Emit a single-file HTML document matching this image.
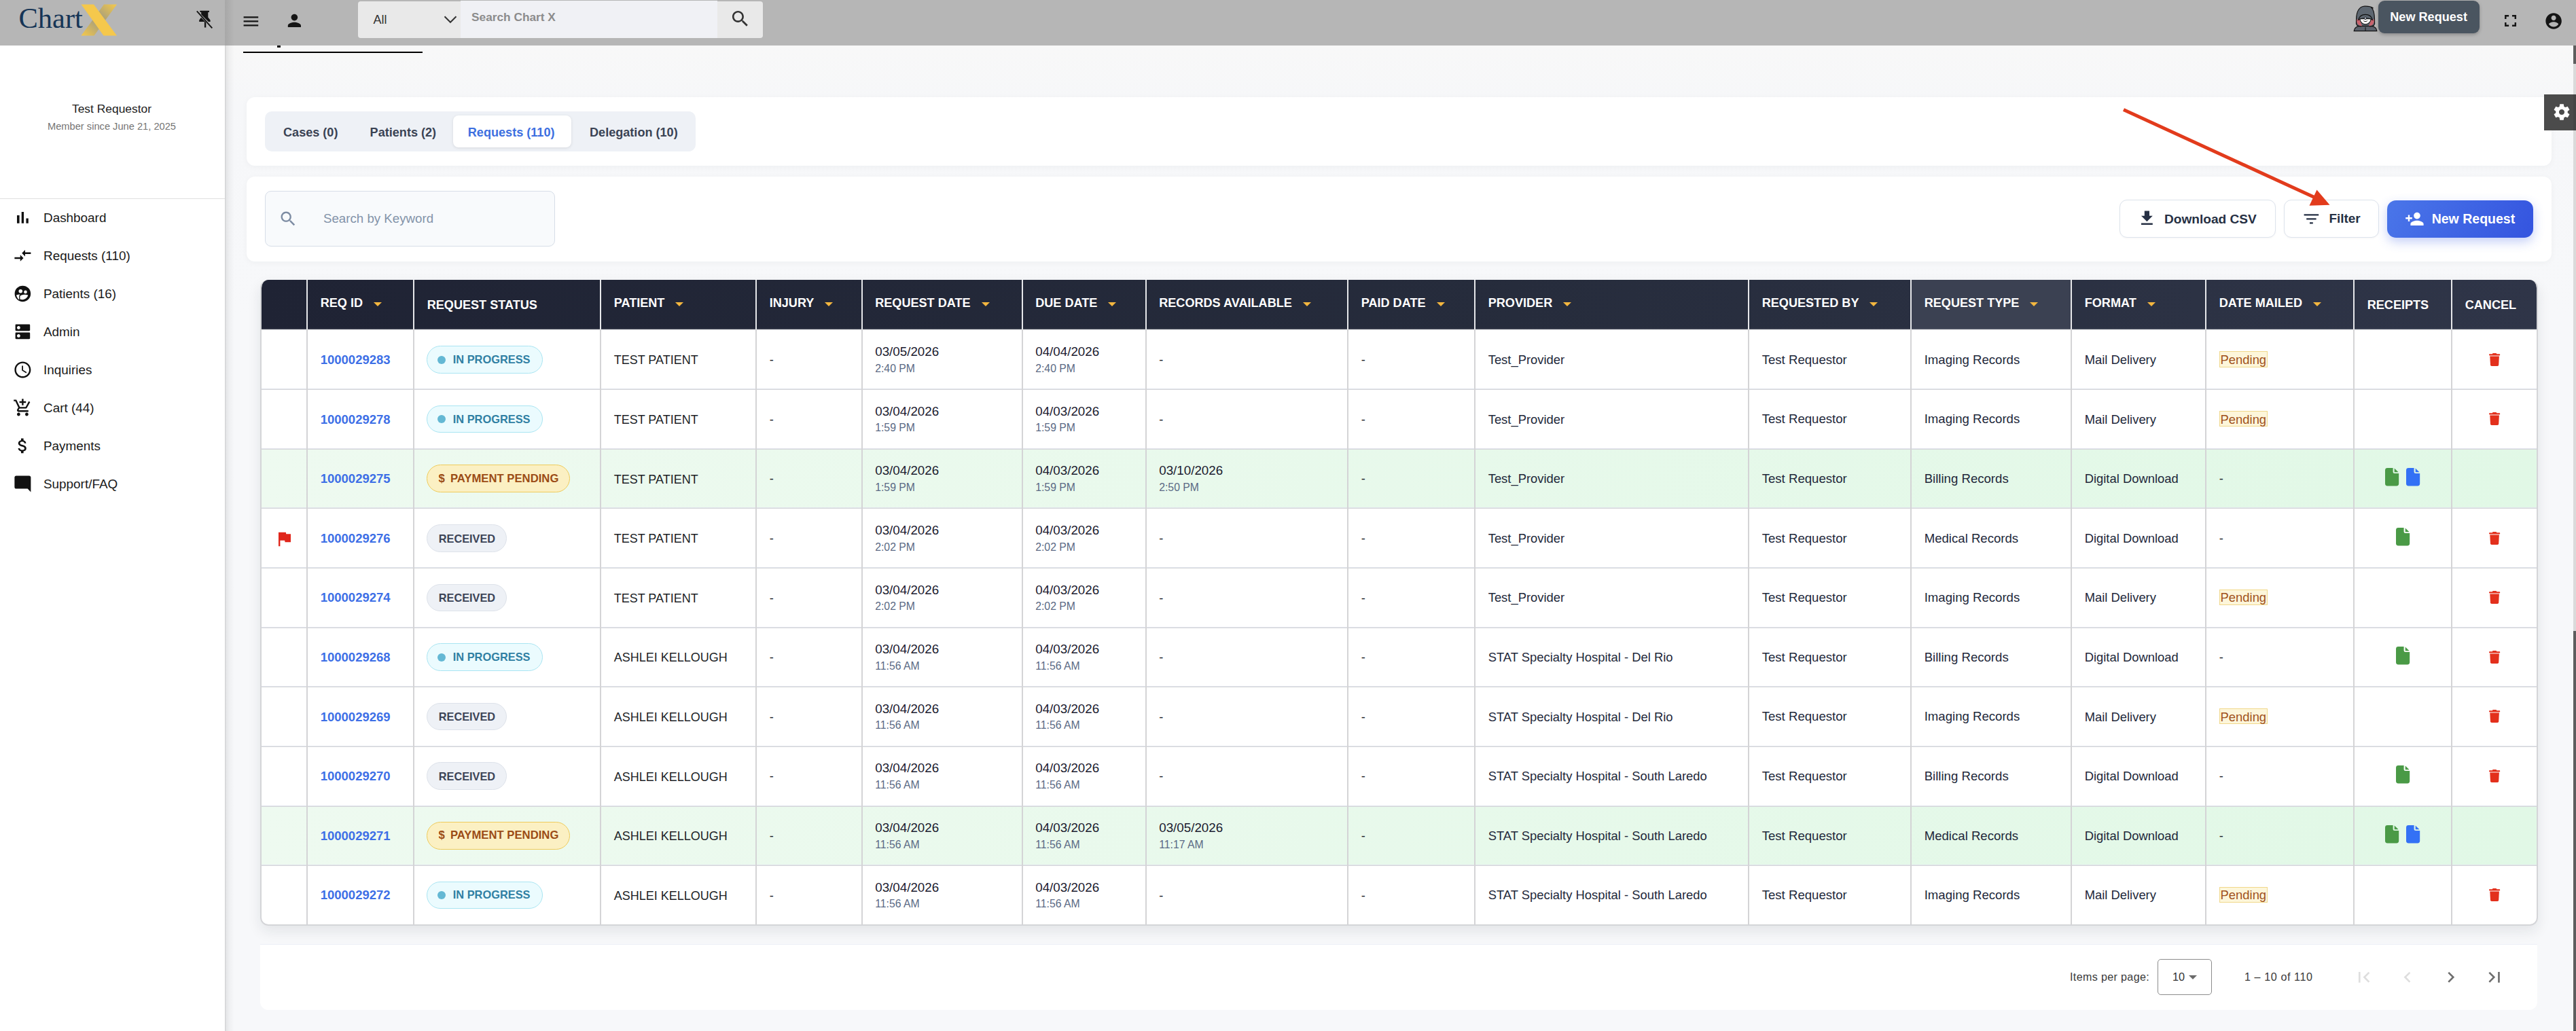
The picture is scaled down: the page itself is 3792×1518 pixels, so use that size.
<!DOCTYPE html>
<html><head><meta charset="utf-8"><title>Chart X - Requests</title>
<style>
html,body{margin:0;padding:0;}
body{width:3792px;height:1518px;overflow:hidden;position:relative;background:#f7f8fa;font-family:"Liberation Sans",sans-serif;}
.a{position:absolute;}
.t{position:absolute;white-space:nowrap;line-height:1;}
svg.a{overflow:visible;}
</style></head><body>
<div class="a" style="left:331.00px;top:67.00px;width:3461.00px;height:1451.00px;background:linear-gradient(#f8f8f8,#f6f7f9 90px,#f7f8fa 400px);"></div>
<div class="a" style="left:358.00px;top:76.00px;width:264.00px;height:2.00px;background:#000;"></div>
<div class="a" style="left:408.00px;top:67.00px;width:5.00px;height:2.50px;background:#111;"></div>
<div class="a" style="left:363.00px;top:143.00px;width:3393.00px;height:101.00px;background:#fff;border-radius:12px;box-shadow:0 2px 10px rgba(30,40,60,.04);"></div>
<div class="a" style="left:390.00px;top:164.00px;width:634.00px;height:58.60px;background:#eef1f6;border-radius:10px;"></div>
<div class="a" style="left:667.00px;top:170.00px;width:174.00px;height:47.00px;background:#fff;border-radius:8px;box-shadow:0 1px 4px rgba(0,0,0,.10);"></div>
<div class="t" style="left:417.00px;top:185.67px;font-size:18.1px;color:#3a4354;font-weight:700;">Cases (0)</div>
<div class="t" style="left:544.60px;top:185.67px;font-size:18.1px;color:#3a4354;font-weight:700;">Patients (2)</div>
<div class="t" style="left:688.80px;top:185.67px;font-size:18.1px;color:#3d6fe0;font-weight:700;">Requests (110)</div>
<div class="t" style="left:868.00px;top:185.67px;font-size:18.1px;color:#3a4354;font-weight:700;">Delegation (10)</div>
<div class="a" style="left:363.00px;top:260.00px;width:3393.00px;height:125.00px;background:#fff;border-radius:12px;box-shadow:0 2px 10px rgba(30,40,60,.04);"></div>
<div class="a" style="left:390.00px;top:281.00px;width:427.00px;height:81.60px;box-sizing:border-box;background:#f8fafc;border:1.5px solid #d7dee8;border-radius:9px;"></div>
<svg class="a" style="left:409.50px;top:308.20px;" width="28.30" height="28.30" viewBox="0 0 24 24"><path fill="#7d8ca3" d="M15.5 14h-.79l-.28-.27C15.41 12.59 16 11.11 16 9.5 16 5.91 13.09 3 9.5 3S3 5.91 3 9.5 5.91 16 9.5 16c1.61 0 3.09-.59 4.23-1.57l.27.28v.79l5 4.99L20.49 19l-4.99-5zm-6 0C7.01 14 5 11.99 5 9.5S7.01 5 9.5 5 14 7.01 14 9.5 11.99 14 9.5 14z"/></svg>
<div class="t" style="left:476.00px;top:313.17px;font-size:18.7px;color:#8393a9;font-weight:400;">Search by Keyword</div>
<div class="a" style="left:3119.60px;top:294.40px;width:230.70px;height:56.00px;box-sizing:border-box;background:#fff;border:1.5px solid #dde3ec;border-radius:11px;box-shadow:0 1px 3px rgba(0,0,0,.04);"></div>
<svg class="a" style="left:3145.80px;top:307.40px;" width="28.80" height="28.80" viewBox="0 0 24 24"><path fill="#263044" d="M19 9h-4V3H9v6H5l7 7 7-7zM5 18v2h14v-2H5z"/></svg>
<div class="t" style="left:3186.00px;top:313.13px;font-size:19.1px;color:#263044;font-weight:700;">Download CSV</div>
<div class="a" style="left:3361.70px;top:294.40px;width:140.70px;height:56.00px;box-sizing:border-box;background:#fff;border:1.5px solid #dde3ec;border-radius:11px;box-shadow:0 1px 3px rgba(0,0,0,.04);"></div>
<svg class="a" style="left:3388.40px;top:307.60px;" width="28.80" height="28.80" viewBox="0 0 24 24"><path fill="#263044" d="M10 18h4v-2h-4v2zM3 6v2h18V6H3zm3 7h12v-2H6v2z"/></svg>
<div class="t" style="left:3428.50px;top:313.30px;font-size:18.9px;color:#263044;font-weight:700;">Filter</div>
<div class="a" style="left:3514.30px;top:295.00px;width:214.60px;height:55.00px;background:linear-gradient(120deg,#4a76e9,#3454df);border-radius:13px;box-shadow:0 6px 16px rgba(60,95,230,.30);"></div>
<svg class="a" style="left:3540.30px;top:308.20px;" width="28.80" height="28.80" viewBox="0 0 24 24"><path fill="#fff" d="M15 12c2.21 0 4-1.79 4-4s-1.79-4-4-4-4 1.79-4 4 1.79 4 4 4zm-9-2V7H4v3H1v2h3v3h2v-3h3v-2H6zm9 4c-2.67 0-8 1.34-8 4v2h16v-2c0-2.66-5.33-4-8-4z"/></svg>
<div class="t" style="left:3579.70px;top:312.79px;font-size:19.5px;color:#fff;font-weight:700;">New Request</div>
<svg class="a" style="left:0;top:0" width="3792" height="1518" viewBox="0 0 3792 1518"><line x1="3126" y1="161.6" x2="3408" y2="291" stroke="#e23b1c" stroke-width="5" stroke-linecap="butt"/><polygon points="3410.5,279.5 3399.5,302.8 3429.5,301.8" fill="#e23b1c"/></svg>
<div class="a" style="left:383.00px;top:412.00px;width:3353.00px;height:950.80px;border-radius:12px;box-shadow:0 8px 20px rgba(20,28,45,.09);"></div>
<div class="a" style="left:383px;top:412px;width:3353px;height:950.8px;box-sizing:border-box;border:2px solid #d4d5d8;border-top:0;border-radius:12px;overflow:hidden;background:#fff;">
<div class="a" style="left:0.00px;top:250.00px;width:3349.00px;height:85.00px;background:linear-gradient(90deg,#eefaf0,#e1f8e6);"></div>
<div class="a" style="left:0.00px;top:776.00px;width:3349.00px;height:85.00px;background:linear-gradient(90deg,#eefaf0,#e1f8e6);"></div>
<div class="a" style="left:0.00px;top:160.00px;width:3349.00px;height:1.00px;background:#e1e4ec;"></div>
<div class="a" style="left:0.00px;top:161.00px;width:3349.00px;height:1.00px;background:#d5d6d9;"></div>
<div class="a" style="left:0.00px;top:248.00px;width:3349.00px;height:1.00px;background:#e1e4ec;"></div>
<div class="a" style="left:0.00px;top:249.00px;width:3349.00px;height:1.00px;background:#d5d6d9;"></div>
<div class="a" style="left:0.00px;top:335.00px;width:3349.00px;height:1.00px;background:#e1e4ec;"></div>
<div class="a" style="left:0.00px;top:336.00px;width:3349.00px;height:1.00px;background:#d5d6d9;"></div>
<div class="a" style="left:0.00px;top:423.00px;width:3349.00px;height:1.00px;background:#e1e4ec;"></div>
<div class="a" style="left:0.00px;top:424.00px;width:3349.00px;height:1.00px;background:#d5d6d9;"></div>
<div class="a" style="left:0.00px;top:511.00px;width:3349.00px;height:1.00px;background:#e1e4ec;"></div>
<div class="a" style="left:0.00px;top:512.00px;width:3349.00px;height:1.00px;background:#d5d6d9;"></div>
<div class="a" style="left:0.00px;top:598.00px;width:3349.00px;height:1.00px;background:#e1e4ec;"></div>
<div class="a" style="left:0.00px;top:599.00px;width:3349.00px;height:1.00px;background:#d5d6d9;"></div>
<div class="a" style="left:0.00px;top:686.00px;width:3349.00px;height:1.00px;background:#e1e4ec;"></div>
<div class="a" style="left:0.00px;top:687.00px;width:3349.00px;height:1.00px;background:#d5d6d9;"></div>
<div class="a" style="left:0.00px;top:774.00px;width:3349.00px;height:1.00px;background:#e1e4ec;"></div>
<div class="a" style="left:0.00px;top:775.00px;width:3349.00px;height:1.00px;background:#d5d6d9;"></div>
<div class="a" style="left:0.00px;top:861.00px;width:3349.00px;height:1.00px;background:#e1e4ec;"></div>
<div class="a" style="left:0.00px;top:862.00px;width:3349.00px;height:1.00px;background:#d5d6d9;"></div>
<div class="a" style="left:66.00px;top:73.00px;width:2.00px;height:876.00px;background:#d4d4d6;"></div>
<div class="a" style="left:223.00px;top:73.00px;width:2.00px;height:876.00px;background:#d4d4d6;"></div>
<div class="a" style="left:498.00px;top:73.00px;width:2.00px;height:876.00px;background:#d4d4d6;"></div>
<div class="a" style="left:727.00px;top:73.00px;width:2.00px;height:876.00px;background:#d4d4d6;"></div>
<div class="a" style="left:882.50px;top:73.00px;width:2.00px;height:876.00px;background:#d4d4d6;"></div>
<div class="a" style="left:1118.50px;top:73.00px;width:2.00px;height:876.00px;background:#d4d4d6;"></div>
<div class="a" style="left:1300.50px;top:73.00px;width:2.00px;height:876.00px;background:#d4d4d6;"></div>
<div class="a" style="left:1598.00px;top:73.00px;width:2.00px;height:876.00px;background:#d4d4d6;"></div>
<div class="a" style="left:1785.00px;top:73.00px;width:2.00px;height:876.00px;background:#d4d4d6;"></div>
<div class="a" style="left:2188.00px;top:73.00px;width:2.00px;height:876.00px;background:#d4d4d6;"></div>
<div class="a" style="left:2427.00px;top:73.00px;width:2.00px;height:876.00px;background:#d4d4d6;"></div>
<div class="a" style="left:2663.00px;top:73.00px;width:2.00px;height:876.00px;background:#d4d4d6;"></div>
<div class="a" style="left:2861.00px;top:73.00px;width:2.00px;height:876.00px;background:#d4d4d6;"></div>
<div class="a" style="left:3079.00px;top:73.00px;width:2.00px;height:876.00px;background:#d4d4d6;"></div>
<div class="a" style="left:3223.00px;top:73.00px;width:2.00px;height:876.00px;background:#d4d4d6;"></div>
<div class="a" style="left:0.00px;top:0.00px;width:3349.00px;height:73.00px;background:linear-gradient(90deg,#1f2334,#262c3c 55%,#2f3548);"></div>
<div class="a" style="left:2429.00px;top:0.00px;width:234.00px;height:73.00px;background:#3b4152;"></div>
<div class="a" style="left:0.00px;top:71.00px;width:3349.00px;height:2.00px;background:rgba(255,255,255,.07);"></div>
<div class="a" style="left:66.00px;top:0.00px;width:2.00px;height:73.00px;background:#e6e7ea;"></div>
<div class="a" style="left:223.00px;top:0.00px;width:2.00px;height:73.00px;background:#e6e7ea;"></div>
<div class="a" style="left:498.00px;top:0.00px;width:2.00px;height:73.00px;background:#e6e7ea;"></div>
<div class="a" style="left:727.00px;top:0.00px;width:2.00px;height:73.00px;background:#e6e7ea;"></div>
<div class="a" style="left:882.50px;top:0.00px;width:2.00px;height:73.00px;background:#e6e7ea;"></div>
<div class="a" style="left:1118.50px;top:0.00px;width:2.00px;height:73.00px;background:#e6e7ea;"></div>
<div class="a" style="left:1300.50px;top:0.00px;width:2.00px;height:73.00px;background:#e6e7ea;"></div>
<div class="a" style="left:1598.00px;top:0.00px;width:2.00px;height:73.00px;background:#e6e7ea;"></div>
<div class="a" style="left:1785.00px;top:0.00px;width:2.00px;height:73.00px;background:#e6e7ea;"></div>
<div class="a" style="left:2188.00px;top:0.00px;width:2.00px;height:73.00px;background:#e6e7ea;"></div>
<div class="a" style="left:2427.00px;top:0.00px;width:2.00px;height:73.00px;background:#e6e7ea;"></div>
<div class="a" style="left:2663.00px;top:0.00px;width:2.00px;height:73.00px;background:#e6e7ea;"></div>
<div class="a" style="left:2861.00px;top:0.00px;width:2.00px;height:73.00px;background:#e6e7ea;"></div>
<div class="a" style="left:3079.00px;top:0.00px;width:2.00px;height:73.00px;background:#e6e7ea;"></div>
<div class="a" style="left:3223.00px;top:0.00px;width:2.00px;height:73.00px;background:#e6e7ea;"></div>
<div class="t" style="left:86.70px;top:25.37px;font-size:18.1px;color:#fff;font-weight:700;">REQ ID<span style="display:inline-block;width:0;height:0;margin-left:16px;border-left:6px solid transparent;border-right:6px solid transparent;border-top:6.5px solid #f3b63f;position:relative;top:-1.2px;"></span></div>
<div class="t" style="left:243.70px;top:27.67px;font-size:18.1px;color:#fff;font-weight:700;">REQUEST STATUS</div>
<div class="t" style="left:518.70px;top:25.37px;font-size:18.1px;color:#fff;font-weight:700;">PATIENT<span style="display:inline-block;width:0;height:0;margin-left:16px;border-left:6px solid transparent;border-right:6px solid transparent;border-top:6.5px solid #f3b63f;position:relative;top:-1.2px;"></span></div>
<div class="t" style="left:747.70px;top:25.37px;font-size:18.1px;color:#fff;font-weight:700;">INJURY<span style="display:inline-block;width:0;height:0;margin-left:16px;border-left:6px solid transparent;border-right:6px solid transparent;border-top:6.5px solid #f3b63f;position:relative;top:-1.2px;"></span></div>
<div class="t" style="left:903.20px;top:25.37px;font-size:18.1px;color:#fff;font-weight:700;">REQUEST DATE<span style="display:inline-block;width:0;height:0;margin-left:16px;border-left:6px solid transparent;border-right:6px solid transparent;border-top:6.5px solid #f3b63f;position:relative;top:-1.2px;"></span></div>
<div class="t" style="left:1139.20px;top:25.37px;font-size:18.1px;color:#fff;font-weight:700;">DUE DATE<span style="display:inline-block;width:0;height:0;margin-left:16px;border-left:6px solid transparent;border-right:6px solid transparent;border-top:6.5px solid #f3b63f;position:relative;top:-1.2px;"></span></div>
<div class="t" style="left:1321.20px;top:25.37px;font-size:18.1px;color:#fff;font-weight:700;">RECORDS AVAILABLE<span style="display:inline-block;width:0;height:0;margin-left:16px;border-left:6px solid transparent;border-right:6px solid transparent;border-top:6.5px solid #f3b63f;position:relative;top:-1.2px;"></span></div>
<div class="t" style="left:1618.70px;top:25.37px;font-size:18.1px;color:#fff;font-weight:700;">PAID DATE<span style="display:inline-block;width:0;height:0;margin-left:16px;border-left:6px solid transparent;border-right:6px solid transparent;border-top:6.5px solid #f3b63f;position:relative;top:-1.2px;"></span></div>
<div class="t" style="left:1805.70px;top:25.37px;font-size:18.1px;color:#fff;font-weight:700;">PROVIDER<span style="display:inline-block;width:0;height:0;margin-left:16px;border-left:6px solid transparent;border-right:6px solid transparent;border-top:6.5px solid #f3b63f;position:relative;top:-1.2px;"></span></div>
<div class="t" style="left:2208.70px;top:25.37px;font-size:18.1px;color:#fff;font-weight:700;">REQUESTED BY<span style="display:inline-block;width:0;height:0;margin-left:16px;border-left:6px solid transparent;border-right:6px solid transparent;border-top:6.5px solid #f3b63f;position:relative;top:-1.2px;"></span></div>
<div class="t" style="left:2447.70px;top:25.37px;font-size:18.1px;color:#fff;font-weight:700;">REQUEST TYPE<span style="display:inline-block;width:0;height:0;margin-left:16px;border-left:6px solid transparent;border-right:6px solid transparent;border-top:6.5px solid #f3b63f;position:relative;top:-1.2px;"></span></div>
<div class="t" style="left:2683.70px;top:25.37px;font-size:18.1px;color:#fff;font-weight:700;">FORMAT<span style="display:inline-block;width:0;height:0;margin-left:16px;border-left:6px solid transparent;border-right:6px solid transparent;border-top:6.5px solid #f3b63f;position:relative;top:-1.2px;"></span></div>
<div class="t" style="left:2881.70px;top:25.37px;font-size:18.1px;color:#fff;font-weight:700;">DATE MAILED<span style="display:inline-block;width:0;height:0;margin-left:16px;border-left:6px solid transparent;border-right:6px solid transparent;border-top:6.5px solid #f3b63f;position:relative;top:-1.2px;"></span></div>
<div class="t" style="left:3099.70px;top:27.67px;font-size:18.1px;color:#fff;font-weight:700;">RECEIPTS</div>
<div class="t" style="left:3243.70px;top:27.67px;font-size:18.1px;color:#fff;font-weight:700;">CANCEL</div>
<div class="t" style="left:86.70px;top:108.94px;font-size:18.5px;color:#3d6fe6;font-weight:700;">1000029283</div>
<div class="a" style="left:243.00px;top:97.20px;width:170.50px;height:40.50px;box-sizing:border-box;background:#ebfbfe;border:1.5px solid #a9e5f2;border-radius:21px;"></div>
<div class="a" style="left:259.00px;top:111.70px;width:12.00px;height:12.00px;background:#64b8d4;border-radius:50%;"></div>
<div class="t" style="left:281.70px;top:109.01px;font-size:16.4px;color:#3080a3;font-weight:700;">IN PROGRESS</div>
<div class="t" style="left:518.70px;top:109.36px;font-size:18.0px;color:#1c1f27;font-weight:400;">TEST PATIENT</div>
<div class="t" style="left:747.70px;top:109.11px;font-size:18.3px;color:#1c1f27;font-weight:400;">-</div>
<div class="t" style="left:903.20px;top:97.28px;font-size:18.8px;color:#1c2030;font-weight:400;">03/05/2026</div>
<div class="t" style="left:903.20px;top:122.82px;font-size:15.8px;color:#5b6a85;font-weight:400;">2:40 PM</div>
<div class="t" style="left:1139.20px;top:97.28px;font-size:18.8px;color:#1c2030;font-weight:400;">04/04/2026</div>
<div class="t" style="left:1139.20px;top:122.82px;font-size:15.8px;color:#5b6a85;font-weight:400;">2:40 PM</div>
<div class="t" style="left:1321.20px;top:109.11px;font-size:18.3px;color:#1c1f27;font-weight:400;">-</div>
<div class="t" style="left:1618.70px;top:109.11px;font-size:18.3px;color:#1c1f27;font-weight:400;">-</div>
<div class="t" style="left:1805.70px;top:109.02px;font-size:18.4px;color:#22283a;font-weight:400;">Test_Provider</div>
<div class="t" style="left:2208.70px;top:108.85px;font-size:18.6px;color:#22283a;font-weight:400;">Test Requestor</div>
<div class="t" style="left:2447.70px;top:108.85px;font-size:18.6px;color:#22283a;font-weight:400;">Imaging Records</div>
<div class="t" style="left:2683.70px;top:109.02px;font-size:18.4px;color:#22283a;font-weight:400;">Mail Delivery</div>
<div class="a" style="left:2882.00px;top:105.20px;width:70.60px;height:23.50px;box-sizing:border-box;background:#fdf6da;border:1px solid #f0d88a;"></div>
<div class="t" style="left:2883.60px;top:109.02px;font-size:18.4px;color:#a0511b;font-weight:400;">Pending</div>
<svg class="a" style="left:3278.90px;top:107.70px" width="16.2" height="19" viewBox="0 0 16.2 19"><path fill="#e3301c" d="M4.8 1.3Q5 0 6.3 0H9.9Q11.2 0 11.4 1.3H15.4Q16.2 1.3 16.2 2.1V2.6Q16.2 3.4 15.4 3.4H0.8Q0 3.4 0 2.6V2.1Q0 1.3 0.8 1.3Z"/><path fill="#e3301c" d="M1.3 4.5H14.9L14.2 17.3Q14.1 19 12.4 19H3.8Q2.1 19 2 17.3Z"/></svg>
<div class="t" style="left:86.70px;top:196.54px;font-size:18.5px;color:#3d6fe6;font-weight:700;">1000029278</div>
<div class="a" style="left:243.00px;top:184.80px;width:170.50px;height:40.50px;box-sizing:border-box;background:#ebfbfe;border:1.5px solid #a9e5f2;border-radius:21px;"></div>
<div class="a" style="left:259.00px;top:199.30px;width:12.00px;height:12.00px;background:#64b8d4;border-radius:50%;"></div>
<div class="t" style="left:281.70px;top:196.61px;font-size:16.4px;color:#3080a3;font-weight:700;">IN PROGRESS</div>
<div class="t" style="left:518.70px;top:196.96px;font-size:18.0px;color:#1c1f27;font-weight:400;">TEST PATIENT</div>
<div class="t" style="left:747.70px;top:196.71px;font-size:18.3px;color:#1c1f27;font-weight:400;">-</div>
<div class="t" style="left:903.20px;top:184.88px;font-size:18.8px;color:#1c2030;font-weight:400;">03/04/2026</div>
<div class="t" style="left:903.20px;top:210.42px;font-size:15.8px;color:#5b6a85;font-weight:400;">1:59 PM</div>
<div class="t" style="left:1139.20px;top:184.88px;font-size:18.8px;color:#1c2030;font-weight:400;">04/03/2026</div>
<div class="t" style="left:1139.20px;top:210.42px;font-size:15.8px;color:#5b6a85;font-weight:400;">1:59 PM</div>
<div class="t" style="left:1321.20px;top:196.71px;font-size:18.3px;color:#1c1f27;font-weight:400;">-</div>
<div class="t" style="left:1618.70px;top:196.71px;font-size:18.3px;color:#1c1f27;font-weight:400;">-</div>
<div class="t" style="left:1805.70px;top:196.62px;font-size:18.4px;color:#22283a;font-weight:400;">Test_Provider</div>
<div class="t" style="left:2208.70px;top:196.45px;font-size:18.6px;color:#22283a;font-weight:400;">Test Requestor</div>
<div class="t" style="left:2447.70px;top:196.45px;font-size:18.6px;color:#22283a;font-weight:400;">Imaging Records</div>
<div class="t" style="left:2683.70px;top:196.62px;font-size:18.4px;color:#22283a;font-weight:400;">Mail Delivery</div>
<div class="a" style="left:2882.00px;top:192.80px;width:70.60px;height:23.50px;box-sizing:border-box;background:#fdf6da;border:1px solid #f0d88a;"></div>
<div class="t" style="left:2883.60px;top:196.62px;font-size:18.4px;color:#a0511b;font-weight:400;">Pending</div>
<svg class="a" style="left:3278.90px;top:195.30px" width="16.2" height="19" viewBox="0 0 16.2 19"><path fill="#e3301c" d="M4.8 1.3Q5 0 6.3 0H9.9Q11.2 0 11.4 1.3H15.4Q16.2 1.3 16.2 2.1V2.6Q16.2 3.4 15.4 3.4H0.8Q0 3.4 0 2.6V2.1Q0 1.3 0.8 1.3Z"/><path fill="#e3301c" d="M1.3 4.5H14.9L14.2 17.3Q14.1 19 12.4 19H3.8Q2.1 19 2 17.3Z"/></svg>
<div class="t" style="left:86.70px;top:284.14px;font-size:18.5px;color:#3d6fe6;font-weight:700;">1000029275</div>
<div class="a" style="left:243.40px;top:272.40px;width:211.00px;height:40.50px;box-sizing:border-box;background:#fbf0c3;border:1.5px solid #eecb5a;border-radius:21px;"></div>
<div class="t" style="left:260.50px;top:284.66px;font-size:16.7px;color:#9b4c16;font-weight:700;">$</div>
<div class="t" style="left:277.90px;top:284.66px;font-size:16.7px;color:#9b4c16;font-weight:700;">PAYMENT PENDING</div>
<div class="t" style="left:518.70px;top:284.56px;font-size:18.0px;color:#1c1f27;font-weight:400;">TEST PATIENT</div>
<div class="t" style="left:747.70px;top:284.31px;font-size:18.3px;color:#1c1f27;font-weight:400;">-</div>
<div class="t" style="left:903.20px;top:272.48px;font-size:18.8px;color:#1c2030;font-weight:400;">03/04/2026</div>
<div class="t" style="left:903.20px;top:298.02px;font-size:15.8px;color:#5b6a85;font-weight:400;">1:59 PM</div>
<div class="t" style="left:1139.20px;top:272.48px;font-size:18.8px;color:#1c2030;font-weight:400;">04/03/2026</div>
<div class="t" style="left:1139.20px;top:298.02px;font-size:15.8px;color:#5b6a85;font-weight:400;">1:59 PM</div>
<div class="t" style="left:1321.20px;top:272.48px;font-size:18.8px;color:#1c2030;font-weight:400;">03/10/2026</div>
<div class="t" style="left:1321.20px;top:298.02px;font-size:15.8px;color:#5b6a85;font-weight:400;">2:50 PM</div>
<div class="t" style="left:1618.70px;top:284.31px;font-size:18.3px;color:#1c1f27;font-weight:400;">-</div>
<div class="t" style="left:1805.70px;top:284.22px;font-size:18.4px;color:#22283a;font-weight:400;">Test_Provider</div>
<div class="t" style="left:2208.70px;top:284.05px;font-size:18.6px;color:#22283a;font-weight:400;">Test Requestor</div>
<div class="t" style="left:2447.70px;top:284.05px;font-size:18.6px;color:#22283a;font-weight:400;">Billing Records</div>
<div class="t" style="left:2683.70px;top:284.22px;font-size:18.4px;color:#22283a;font-weight:400;">Digital Download</div>
<div class="t" style="left:2881.70px;top:284.31px;font-size:18.3px;color:#1c1f27;font-weight:400;">-</div>
<svg class="a" style="left:3126.40px;top:277.20px" width="20.2" height="26.5" viewBox="0 0 20.2 26.5"><path fill="#4a9a46" d="M3.5 0H11.6V5.6Q11.6 8.1 14.1 8.1H20.2V23Q20.2 26.5 16.7 26.5H3.5Q0 26.5 0 23V3.5Q0 0 3.5 0Z"/><path fill="#4a9a46" d="M13.7 0.6V6.3H19.6Z"/></svg>
<svg class="a" style="left:3156.90px;top:277.20px" width="20.2" height="26.5" viewBox="0 0 20.2 26.5"><path fill="#3371f5" d="M3.5 0H11.6V5.6Q11.6 8.1 14.1 8.1H20.2V23Q20.2 26.5 16.7 26.5H3.5Q0 26.5 0 23V3.5Q0 0 3.5 0Z"/><path fill="#3371f5" d="M13.7 0.6V6.3H19.6Z"/></svg>
<svg class="a" style="left:18.50px;top:367.00px;" width="28.80" height="28.80" viewBox="0 0 24 24"><path fill="#e0261b" d="M14.4 6L14 4H5v17h2v-7h5.6l.4 2h7V6z"/></svg>
<div class="t" style="left:86.70px;top:371.74px;font-size:18.5px;color:#3d6fe6;font-weight:700;">1000029276</div>
<div class="a" style="left:243.00px;top:360.00px;width:118.30px;height:40.50px;box-sizing:border-box;background:#eef1f6;border:1.5px solid #dde2ea;border-radius:21px;"></div>
<div class="t" style="left:260.80px;top:372.60px;font-size:16.3px;color:#3c4456;font-weight:700;">RECEIVED</div>
<div class="t" style="left:518.70px;top:372.16px;font-size:18.0px;color:#1c1f27;font-weight:400;">TEST PATIENT</div>
<div class="t" style="left:747.70px;top:371.91px;font-size:18.3px;color:#1c1f27;font-weight:400;">-</div>
<div class="t" style="left:903.20px;top:360.08px;font-size:18.8px;color:#1c2030;font-weight:400;">03/04/2026</div>
<div class="t" style="left:903.20px;top:385.62px;font-size:15.8px;color:#5b6a85;font-weight:400;">2:02 PM</div>
<div class="t" style="left:1139.20px;top:360.08px;font-size:18.8px;color:#1c2030;font-weight:400;">04/03/2026</div>
<div class="t" style="left:1139.20px;top:385.62px;font-size:15.8px;color:#5b6a85;font-weight:400;">2:02 PM</div>
<div class="t" style="left:1321.20px;top:371.91px;font-size:18.3px;color:#1c1f27;font-weight:400;">-</div>
<div class="t" style="left:1618.70px;top:371.91px;font-size:18.3px;color:#1c1f27;font-weight:400;">-</div>
<div class="t" style="left:1805.70px;top:371.82px;font-size:18.4px;color:#22283a;font-weight:400;">Test_Provider</div>
<div class="t" style="left:2208.70px;top:371.65px;font-size:18.6px;color:#22283a;font-weight:400;">Test Requestor</div>
<div class="t" style="left:2447.70px;top:371.65px;font-size:18.6px;color:#22283a;font-weight:400;">Medical Records</div>
<div class="t" style="left:2683.70px;top:371.82px;font-size:18.4px;color:#22283a;font-weight:400;">Digital Download</div>
<div class="t" style="left:2881.70px;top:371.91px;font-size:18.3px;color:#1c1f27;font-weight:400;">-</div>
<svg class="a" style="left:3141.80px;top:364.80px" width="20.2" height="26.5" viewBox="0 0 20.2 26.5"><path fill="#4a9a46" d="M3.5 0H11.6V5.6Q11.6 8.1 14.1 8.1H20.2V23Q20.2 26.5 16.7 26.5H3.5Q0 26.5 0 23V3.5Q0 0 3.5 0Z"/><path fill="#4a9a46" d="M13.7 0.6V6.3H19.6Z"/></svg>
<svg class="a" style="left:3278.90px;top:370.50px" width="16.2" height="19" viewBox="0 0 16.2 19"><path fill="#e3301c" d="M4.8 1.3Q5 0 6.3 0H9.9Q11.2 0 11.4 1.3H15.4Q16.2 1.3 16.2 2.1V2.6Q16.2 3.4 15.4 3.4H0.8Q0 3.4 0 2.6V2.1Q0 1.3 0.8 1.3Z"/><path fill="#e3301c" d="M1.3 4.5H14.9L14.2 17.3Q14.1 19 12.4 19H3.8Q2.1 19 2 17.3Z"/></svg>
<div class="t" style="left:86.70px;top:459.34px;font-size:18.5px;color:#3d6fe6;font-weight:700;">1000029274</div>
<div class="a" style="left:243.00px;top:447.60px;width:118.30px;height:40.50px;box-sizing:border-box;background:#eef1f6;border:1.5px solid #dde2ea;border-radius:21px;"></div>
<div class="t" style="left:260.80px;top:460.20px;font-size:16.3px;color:#3c4456;font-weight:700;">RECEIVED</div>
<div class="t" style="left:518.70px;top:459.76px;font-size:18.0px;color:#1c1f27;font-weight:400;">TEST PATIENT</div>
<div class="t" style="left:747.70px;top:459.51px;font-size:18.3px;color:#1c1f27;font-weight:400;">-</div>
<div class="t" style="left:903.20px;top:447.68px;font-size:18.8px;color:#1c2030;font-weight:400;">03/04/2026</div>
<div class="t" style="left:903.20px;top:473.22px;font-size:15.8px;color:#5b6a85;font-weight:400;">2:02 PM</div>
<div class="t" style="left:1139.20px;top:447.68px;font-size:18.8px;color:#1c2030;font-weight:400;">04/03/2026</div>
<div class="t" style="left:1139.20px;top:473.22px;font-size:15.8px;color:#5b6a85;font-weight:400;">2:02 PM</div>
<div class="t" style="left:1321.20px;top:459.51px;font-size:18.3px;color:#1c1f27;font-weight:400;">-</div>
<div class="t" style="left:1618.70px;top:459.51px;font-size:18.3px;color:#1c1f27;font-weight:400;">-</div>
<div class="t" style="left:1805.70px;top:459.42px;font-size:18.4px;color:#22283a;font-weight:400;">Test_Provider</div>
<div class="t" style="left:2208.70px;top:459.25px;font-size:18.6px;color:#22283a;font-weight:400;">Test Requestor</div>
<div class="t" style="left:2447.70px;top:459.25px;font-size:18.6px;color:#22283a;font-weight:400;">Imaging Records</div>
<div class="t" style="left:2683.70px;top:459.42px;font-size:18.4px;color:#22283a;font-weight:400;">Mail Delivery</div>
<div class="a" style="left:2882.00px;top:455.60px;width:70.60px;height:23.50px;box-sizing:border-box;background:#fdf6da;border:1px solid #f0d88a;"></div>
<div class="t" style="left:2883.60px;top:459.42px;font-size:18.4px;color:#a0511b;font-weight:400;">Pending</div>
<svg class="a" style="left:3278.90px;top:458.10px" width="16.2" height="19" viewBox="0 0 16.2 19"><path fill="#e3301c" d="M4.8 1.3Q5 0 6.3 0H9.9Q11.2 0 11.4 1.3H15.4Q16.2 1.3 16.2 2.1V2.6Q16.2 3.4 15.4 3.4H0.8Q0 3.4 0 2.6V2.1Q0 1.3 0.8 1.3Z"/><path fill="#e3301c" d="M1.3 4.5H14.9L14.2 17.3Q14.1 19 12.4 19H3.8Q2.1 19 2 17.3Z"/></svg>
<div class="t" style="left:86.70px;top:546.94px;font-size:18.5px;color:#3d6fe6;font-weight:700;">1000029268</div>
<div class="a" style="left:243.00px;top:535.20px;width:170.50px;height:40.50px;box-sizing:border-box;background:#ebfbfe;border:1.5px solid #a9e5f2;border-radius:21px;"></div>
<div class="a" style="left:259.00px;top:549.70px;width:12.00px;height:12.00px;background:#64b8d4;border-radius:50%;"></div>
<div class="t" style="left:281.70px;top:547.01px;font-size:16.4px;color:#3080a3;font-weight:700;">IN PROGRESS</div>
<div class="t" style="left:518.70px;top:547.36px;font-size:18.0px;color:#1c1f27;font-weight:400;">ASHLEI KELLOUGH</div>
<div class="t" style="left:747.70px;top:547.11px;font-size:18.3px;color:#1c1f27;font-weight:400;">-</div>
<div class="t" style="left:903.20px;top:535.28px;font-size:18.8px;color:#1c2030;font-weight:400;">03/04/2026</div>
<div class="t" style="left:903.20px;top:560.82px;font-size:15.8px;color:#5b6a85;font-weight:400;">11:56 AM</div>
<div class="t" style="left:1139.20px;top:535.28px;font-size:18.8px;color:#1c2030;font-weight:400;">04/03/2026</div>
<div class="t" style="left:1139.20px;top:560.82px;font-size:15.8px;color:#5b6a85;font-weight:400;">11:56 AM</div>
<div class="t" style="left:1321.20px;top:547.11px;font-size:18.3px;color:#1c1f27;font-weight:400;">-</div>
<div class="t" style="left:1618.70px;top:547.11px;font-size:18.3px;color:#1c1f27;font-weight:400;">-</div>
<div class="t" style="left:1805.70px;top:547.02px;font-size:18.4px;color:#22283a;font-weight:400;">STAT Specialty Hospital - Del Rio</div>
<div class="t" style="left:2208.70px;top:546.85px;font-size:18.6px;color:#22283a;font-weight:400;">Test Requestor</div>
<div class="t" style="left:2447.70px;top:546.85px;font-size:18.6px;color:#22283a;font-weight:400;">Billing Records</div>
<div class="t" style="left:2683.70px;top:547.02px;font-size:18.4px;color:#22283a;font-weight:400;">Digital Download</div>
<div class="t" style="left:2881.70px;top:547.11px;font-size:18.3px;color:#1c1f27;font-weight:400;">-</div>
<svg class="a" style="left:3141.80px;top:540.00px" width="20.2" height="26.5" viewBox="0 0 20.2 26.5"><path fill="#4a9a46" d="M3.5 0H11.6V5.6Q11.6 8.1 14.1 8.1H20.2V23Q20.2 26.5 16.7 26.5H3.5Q0 26.5 0 23V3.5Q0 0 3.5 0Z"/><path fill="#4a9a46" d="M13.7 0.6V6.3H19.6Z"/></svg>
<svg class="a" style="left:3278.90px;top:545.70px" width="16.2" height="19" viewBox="0 0 16.2 19"><path fill="#e3301c" d="M4.8 1.3Q5 0 6.3 0H9.9Q11.2 0 11.4 1.3H15.4Q16.2 1.3 16.2 2.1V2.6Q16.2 3.4 15.4 3.4H0.8Q0 3.4 0 2.6V2.1Q0 1.3 0.8 1.3Z"/><path fill="#e3301c" d="M1.3 4.5H14.9L14.2 17.3Q14.1 19 12.4 19H3.8Q2.1 19 2 17.3Z"/></svg>
<div class="t" style="left:86.70px;top:634.54px;font-size:18.5px;color:#3d6fe6;font-weight:700;">1000029269</div>
<div class="a" style="left:243.00px;top:622.80px;width:118.30px;height:40.50px;box-sizing:border-box;background:#eef1f6;border:1.5px solid #dde2ea;border-radius:21px;"></div>
<div class="t" style="left:260.80px;top:635.40px;font-size:16.3px;color:#3c4456;font-weight:700;">RECEIVED</div>
<div class="t" style="left:518.70px;top:634.96px;font-size:18.0px;color:#1c1f27;font-weight:400;">ASHLEI KELLOUGH</div>
<div class="t" style="left:747.70px;top:634.71px;font-size:18.3px;color:#1c1f27;font-weight:400;">-</div>
<div class="t" style="left:903.20px;top:622.88px;font-size:18.8px;color:#1c2030;font-weight:400;">03/04/2026</div>
<div class="t" style="left:903.20px;top:648.42px;font-size:15.8px;color:#5b6a85;font-weight:400;">11:56 AM</div>
<div class="t" style="left:1139.20px;top:622.88px;font-size:18.8px;color:#1c2030;font-weight:400;">04/03/2026</div>
<div class="t" style="left:1139.20px;top:648.42px;font-size:15.8px;color:#5b6a85;font-weight:400;">11:56 AM</div>
<div class="t" style="left:1321.20px;top:634.71px;font-size:18.3px;color:#1c1f27;font-weight:400;">-</div>
<div class="t" style="left:1618.70px;top:634.71px;font-size:18.3px;color:#1c1f27;font-weight:400;">-</div>
<div class="t" style="left:1805.70px;top:634.62px;font-size:18.4px;color:#22283a;font-weight:400;">STAT Specialty Hospital - Del Rio</div>
<div class="t" style="left:2208.70px;top:634.45px;font-size:18.6px;color:#22283a;font-weight:400;">Test Requestor</div>
<div class="t" style="left:2447.70px;top:634.45px;font-size:18.6px;color:#22283a;font-weight:400;">Imaging Records</div>
<div class="t" style="left:2683.70px;top:634.62px;font-size:18.4px;color:#22283a;font-weight:400;">Mail Delivery</div>
<div class="a" style="left:2882.00px;top:630.80px;width:70.60px;height:23.50px;box-sizing:border-box;background:#fdf6da;border:1px solid #f0d88a;"></div>
<div class="t" style="left:2883.60px;top:634.62px;font-size:18.4px;color:#a0511b;font-weight:400;">Pending</div>
<svg class="a" style="left:3278.90px;top:633.30px" width="16.2" height="19" viewBox="0 0 16.2 19"><path fill="#e3301c" d="M4.8 1.3Q5 0 6.3 0H9.9Q11.2 0 11.4 1.3H15.4Q16.2 1.3 16.2 2.1V2.6Q16.2 3.4 15.4 3.4H0.8Q0 3.4 0 2.6V2.1Q0 1.3 0.8 1.3Z"/><path fill="#e3301c" d="M1.3 4.5H14.9L14.2 17.3Q14.1 19 12.4 19H3.8Q2.1 19 2 17.3Z"/></svg>
<div class="t" style="left:86.70px;top:722.14px;font-size:18.5px;color:#3d6fe6;font-weight:700;">1000029270</div>
<div class="a" style="left:243.00px;top:710.40px;width:118.30px;height:40.50px;box-sizing:border-box;background:#eef1f6;border:1.5px solid #dde2ea;border-radius:21px;"></div>
<div class="t" style="left:260.80px;top:723.00px;font-size:16.3px;color:#3c4456;font-weight:700;">RECEIVED</div>
<div class="t" style="left:518.70px;top:722.56px;font-size:18.0px;color:#1c1f27;font-weight:400;">ASHLEI KELLOUGH</div>
<div class="t" style="left:747.70px;top:722.31px;font-size:18.3px;color:#1c1f27;font-weight:400;">-</div>
<div class="t" style="left:903.20px;top:710.48px;font-size:18.8px;color:#1c2030;font-weight:400;">03/04/2026</div>
<div class="t" style="left:903.20px;top:736.02px;font-size:15.8px;color:#5b6a85;font-weight:400;">11:56 AM</div>
<div class="t" style="left:1139.20px;top:710.48px;font-size:18.8px;color:#1c2030;font-weight:400;">04/03/2026</div>
<div class="t" style="left:1139.20px;top:736.02px;font-size:15.8px;color:#5b6a85;font-weight:400;">11:56 AM</div>
<div class="t" style="left:1321.20px;top:722.31px;font-size:18.3px;color:#1c1f27;font-weight:400;">-</div>
<div class="t" style="left:1618.70px;top:722.31px;font-size:18.3px;color:#1c1f27;font-weight:400;">-</div>
<div class="t" style="left:1805.70px;top:722.22px;font-size:18.4px;color:#22283a;font-weight:400;">STAT Specialty Hospital - South Laredo</div>
<div class="t" style="left:2208.70px;top:722.05px;font-size:18.6px;color:#22283a;font-weight:400;">Test Requestor</div>
<div class="t" style="left:2447.70px;top:722.05px;font-size:18.6px;color:#22283a;font-weight:400;">Billing Records</div>
<div class="t" style="left:2683.70px;top:722.22px;font-size:18.4px;color:#22283a;font-weight:400;">Digital Download</div>
<div class="t" style="left:2881.70px;top:722.31px;font-size:18.3px;color:#1c1f27;font-weight:400;">-</div>
<svg class="a" style="left:3141.80px;top:715.20px" width="20.2" height="26.5" viewBox="0 0 20.2 26.5"><path fill="#4a9a46" d="M3.5 0H11.6V5.6Q11.6 8.1 14.1 8.1H20.2V23Q20.2 26.5 16.7 26.5H3.5Q0 26.5 0 23V3.5Q0 0 3.5 0Z"/><path fill="#4a9a46" d="M13.7 0.6V6.3H19.6Z"/></svg>
<svg class="a" style="left:3278.90px;top:720.90px" width="16.2" height="19" viewBox="0 0 16.2 19"><path fill="#e3301c" d="M4.8 1.3Q5 0 6.3 0H9.9Q11.2 0 11.4 1.3H15.4Q16.2 1.3 16.2 2.1V2.6Q16.2 3.4 15.4 3.4H0.8Q0 3.4 0 2.6V2.1Q0 1.3 0.8 1.3Z"/><path fill="#e3301c" d="M1.3 4.5H14.9L14.2 17.3Q14.1 19 12.4 19H3.8Q2.1 19 2 17.3Z"/></svg>
<div class="t" style="left:86.70px;top:809.74px;font-size:18.5px;color:#3d6fe6;font-weight:700;">1000029271</div>
<div class="a" style="left:243.40px;top:798.00px;width:211.00px;height:40.50px;box-sizing:border-box;background:#fbf0c3;border:1.5px solid #eecb5a;border-radius:21px;"></div>
<div class="t" style="left:260.50px;top:810.26px;font-size:16.7px;color:#9b4c16;font-weight:700;">$</div>
<div class="t" style="left:277.90px;top:810.26px;font-size:16.7px;color:#9b4c16;font-weight:700;">PAYMENT PENDING</div>
<div class="t" style="left:518.70px;top:810.16px;font-size:18.0px;color:#1c1f27;font-weight:400;">ASHLEI KELLOUGH</div>
<div class="t" style="left:747.70px;top:809.91px;font-size:18.3px;color:#1c1f27;font-weight:400;">-</div>
<div class="t" style="left:903.20px;top:798.08px;font-size:18.8px;color:#1c2030;font-weight:400;">03/04/2026</div>
<div class="t" style="left:903.20px;top:823.62px;font-size:15.8px;color:#5b6a85;font-weight:400;">11:56 AM</div>
<div class="t" style="left:1139.20px;top:798.08px;font-size:18.8px;color:#1c2030;font-weight:400;">04/03/2026</div>
<div class="t" style="left:1139.20px;top:823.62px;font-size:15.8px;color:#5b6a85;font-weight:400;">11:56 AM</div>
<div class="t" style="left:1321.20px;top:798.08px;font-size:18.8px;color:#1c2030;font-weight:400;">03/05/2026</div>
<div class="t" style="left:1321.20px;top:823.62px;font-size:15.8px;color:#5b6a85;font-weight:400;">11:17 AM</div>
<div class="t" style="left:1618.70px;top:809.91px;font-size:18.3px;color:#1c1f27;font-weight:400;">-</div>
<div class="t" style="left:1805.70px;top:809.82px;font-size:18.4px;color:#22283a;font-weight:400;">STAT Specialty Hospital - South Laredo</div>
<div class="t" style="left:2208.70px;top:809.65px;font-size:18.6px;color:#22283a;font-weight:400;">Test Requestor</div>
<div class="t" style="left:2447.70px;top:809.65px;font-size:18.6px;color:#22283a;font-weight:400;">Medical Records</div>
<div class="t" style="left:2683.70px;top:809.82px;font-size:18.4px;color:#22283a;font-weight:400;">Digital Download</div>
<div class="t" style="left:2881.70px;top:809.91px;font-size:18.3px;color:#1c1f27;font-weight:400;">-</div>
<svg class="a" style="left:3126.40px;top:802.80px" width="20.2" height="26.5" viewBox="0 0 20.2 26.5"><path fill="#4a9a46" d="M3.5 0H11.6V5.6Q11.6 8.1 14.1 8.1H20.2V23Q20.2 26.5 16.7 26.5H3.5Q0 26.5 0 23V3.5Q0 0 3.5 0Z"/><path fill="#4a9a46" d="M13.7 0.6V6.3H19.6Z"/></svg>
<svg class="a" style="left:3156.90px;top:802.80px" width="20.2" height="26.5" viewBox="0 0 20.2 26.5"><path fill="#3371f5" d="M3.5 0H11.6V5.6Q11.6 8.1 14.1 8.1H20.2V23Q20.2 26.5 16.7 26.5H3.5Q0 26.5 0 23V3.5Q0 0 3.5 0Z"/><path fill="#3371f5" d="M13.7 0.6V6.3H19.6Z"/></svg>
<div class="t" style="left:86.70px;top:897.34px;font-size:18.5px;color:#3d6fe6;font-weight:700;">1000029272</div>
<div class="a" style="left:243.00px;top:885.60px;width:170.50px;height:40.50px;box-sizing:border-box;background:#ebfbfe;border:1.5px solid #a9e5f2;border-radius:21px;"></div>
<div class="a" style="left:259.00px;top:900.10px;width:12.00px;height:12.00px;background:#64b8d4;border-radius:50%;"></div>
<div class="t" style="left:281.70px;top:897.41px;font-size:16.4px;color:#3080a3;font-weight:700;">IN PROGRESS</div>
<div class="t" style="left:518.70px;top:897.76px;font-size:18.0px;color:#1c1f27;font-weight:400;">ASHLEI KELLOUGH</div>
<div class="t" style="left:747.70px;top:897.51px;font-size:18.3px;color:#1c1f27;font-weight:400;">-</div>
<div class="t" style="left:903.20px;top:885.68px;font-size:18.8px;color:#1c2030;font-weight:400;">03/04/2026</div>
<div class="t" style="left:903.20px;top:911.22px;font-size:15.8px;color:#5b6a85;font-weight:400;">11:56 AM</div>
<div class="t" style="left:1139.20px;top:885.68px;font-size:18.8px;color:#1c2030;font-weight:400;">04/03/2026</div>
<div class="t" style="left:1139.20px;top:911.22px;font-size:15.8px;color:#5b6a85;font-weight:400;">11:56 AM</div>
<div class="t" style="left:1321.20px;top:897.51px;font-size:18.3px;color:#1c1f27;font-weight:400;">-</div>
<div class="t" style="left:1618.70px;top:897.51px;font-size:18.3px;color:#1c1f27;font-weight:400;">-</div>
<div class="t" style="left:1805.70px;top:897.42px;font-size:18.4px;color:#22283a;font-weight:400;">STAT Specialty Hospital - South Laredo</div>
<div class="t" style="left:2208.70px;top:897.25px;font-size:18.6px;color:#22283a;font-weight:400;">Test Requestor</div>
<div class="t" style="left:2447.70px;top:897.25px;font-size:18.6px;color:#22283a;font-weight:400;">Imaging Records</div>
<div class="t" style="left:2683.70px;top:897.42px;font-size:18.4px;color:#22283a;font-weight:400;">Mail Delivery</div>
<div class="a" style="left:2882.00px;top:893.60px;width:70.60px;height:23.50px;box-sizing:border-box;background:#fdf6da;border:1px solid #f0d88a;"></div>
<div class="t" style="left:2883.60px;top:897.42px;font-size:18.4px;color:#a0511b;font-weight:400;">Pending</div>
<svg class="a" style="left:3278.90px;top:896.10px" width="16.2" height="19" viewBox="0 0 16.2 19"><path fill="#e3301c" d="M4.8 1.3Q5 0 6.3 0H9.9Q11.2 0 11.4 1.3H15.4Q16.2 1.3 16.2 2.1V2.6Q16.2 3.4 15.4 3.4H0.8Q0 3.4 0 2.6V2.1Q0 1.3 0.8 1.3Z"/><path fill="#e3301c" d="M1.3 4.5H14.9L14.2 17.3Q14.1 19 12.4 19H3.8Q2.1 19 2 17.3Z"/></svg>
</div>
<div class="a" style="left:383.00px;top:1389.80px;width:3352.00px;height:96.90px;background:#fff;border-radius:0 0 12px 12px;border-top:1px solid #edeff6;box-sizing:border-box;"></div>
<div class="t" style="left:3047.00px;top:1429.97px;font-size:16.1px;color:#3a3a3a;font-weight:400;letter-spacing:0.35px;">Items per page:</div>
<div class="a" style="left:3176.40px;top:1412.00px;width:79.80px;height:52.80px;box-sizing:border-box;border:1.3px solid #8c8c8c;border-radius:5px;"></div>
<div class="t" style="left:3198.00px;top:1429.80px;font-size:16.3px;color:#333;font-weight:400;">10</div>
<div class="a" style="left:3222px;top:1436px;width:0;height:0;border-left:6.2px solid transparent;border-right:6.2px solid transparent;border-top:6.5px solid #6a6a6a;"></div>
<div class="t" style="left:3304.00px;top:1429.97px;font-size:16.1px;color:#3a3a3a;font-weight:400;letter-spacing:0.6px;">1 – 10 of 110</div>
<svg class="a" style="left:3464.20px;top:1423.00px;" width="31.70" height="31.70" viewBox="0 0 24 24"><path fill="#dedede" d="M18.41 16.59L13.82 12l4.59-4.59L17 6l-6 6 6 6zM6 6h2v12H6z"/></svg>
<svg class="a" style="left:3528.20px;top:1423.00px;" width="31.70" height="31.70" viewBox="0 0 24 24"><path fill="#dedede" d="M15.41 7.41L14 6l-6 6 6 6 1.41-1.41L10.83 12z"/></svg>
<svg class="a" style="left:3592.10px;top:1423.00px;" width="31.70" height="31.70" viewBox="0 0 24 24"><path fill="#6e6e6e" d="M10 6L8.59 7.41 13.17 12l-4.58 4.59L10 18l6-6z"/></svg>
<svg class="a" style="left:3656.20px;top:1423.00px;" width="31.70" height="31.70" viewBox="0 0 24 24"><path fill="#6e6e6e" d="M5.59 7.41L10.18 12l-4.59 4.59L7 18l6-6-6-6zM16 6h2v12h-2z"/></svg>
<div class="a" style="left:0.00px;top:67.00px;width:331.00px;height:1451.00px;background:#fff;"></div>
<div class="a" style="left:331.00px;top:67.00px;width:14.00px;height:1451.00px;background:linear-gradient(90deg,rgba(0,0,0,.17),rgba(0,0,0,.07) 15%,rgba(0,0,0,.03) 50%,rgba(0,0,0,0));"></div>
<div class="t" style="left:106.00px;top:152.07px;font-size:17.4px;color:#222;font-weight:400;">Test Requestor</div>
<div class="t" style="left:70.00px;top:178.99px;font-size:14.66px;color:#757575;font-weight:400;">Member since June 21, 2025</div>
<div class="a" style="left:0.00px;top:291.50px;width:331.00px;height:1.20px;background:#e0e0e0;"></div>
<svg class="a" style="left:19.00px;top:306.00px;" width="28.80" height="28.80" viewBox="0 0 24 24"><path fill="#111" d="M5 9.2h3V19H5zM10.6 5h2.8v14h-2.8zm5.6 8H19v6h-2.8z"/></svg>
<div class="t" style="left:64.00px;top:311.70px;font-size:18.9px;color:#1a1a1a;font-weight:400;">Dashboard</div>
<svg class="a" style="left:19.00px;top:362.00px;" width="28.80" height="28.80" viewBox="0 0 24 24"><path fill="#111" d="M9.01 14H2v2h7.01v3L13 15l-3.99-4v3zm5.98-1v-3H22V8h-7.01V5L11 9l3.99 4z"/></svg>
<div class="t" style="left:64.00px;top:367.70px;font-size:18.9px;color:#1a1a1a;font-weight:400;">Requests (110)</div>
<svg class="a" style="left:19.4px;top:418.00px" width="28.8" height="28.8" viewBox="0 0 24 24"><circle cx="12" cy="12" r="9.8" fill="#111"/><circle cx="9.4" cy="8.9" r="2.3" fill="#fff"/><circle cx="15.4" cy="9.9" r="1.95" fill="#fff"/><path fill="#fff" d="M4.2 13.7c1.4-.5 3-.8 4.6-.8-.9.7-1.2 1.7-1.2 2.8v3.7C6 18.3 4.8 16.2 4.2 13.7z"/><path fill="#fff" d="M8.7 15.6c0-1.6 3.4-2.4 5.6-2.4 1.7 0 3.2.3 4.3.7-.9 3-3.6 5.2-6.7 5.4-1.2 0-2.2-.2-3.2-.5v-3.2z"/></svg>
<div class="t" style="left:64.00px;top:423.70px;font-size:18.9px;color:#1a1a1a;font-weight:400;">Patients (16)</div>
<svg class="a" style="left:19.00px;top:474.00px;" width="28.80" height="28.80" viewBox="0 0 24 24"><path fill="#111" d="M20 13H4c-.55 0-1 .45-1 1v6c0 .55.45 1 1 1h16c.55 0 1-.45 1-1v-6c0-.55-.45-1-1-1zM7 19c-1.1 0-2-.9-2-2s.9-2 2-2 2 .9 2 2-.9 2-2 2zM20 3H4c-.55 0-1 .45-1 1v6c0 .55.45 1 1 1h16c.55 0 1-.45 1-1V4c0-.55-.45-1-1-1zM7 9c-1.1 0-2-.9-2-2s.9-2 2-2 2 .9 2 2-.9 2-2 2z"/></svg>
<div class="t" style="left:64.00px;top:479.70px;font-size:18.9px;color:#1a1a1a;font-weight:400;">Admin</div>
<svg class="a" style="left:19.00px;top:530.00px;" width="28.80" height="28.80" viewBox="0 0 24 24"><path fill="#111" d="M11.99 2C6.47 2 2 6.48 2 12s4.47 10 9.99 10C17.52 22 22 17.52 22 12S17.52 2 11.99 2zM12 20c-4.42 0-8-3.58-8-8s3.58-8 8-8 8 3.58 8 8-3.58 8-8 8zm.5-13H11v6l5.25 3.15.75-1.23-4.5-2.67z"/></svg>
<div class="t" style="left:64.00px;top:535.70px;font-size:18.9px;color:#1a1a1a;font-weight:400;">Inquiries</div>
<svg class="a" style="left:19.00px;top:586.00px;" width="28.80" height="28.80" viewBox="0 0 24 24"><path fill="#111" d="M11 9h2V6h3V4h-3V1h-2v3H8v2h3v3zm-4 9c-1.1 0-1.99.9-1.99 2S5.9 22 7 22s2-.9 2-2-.9-2-2-2zm10 0c-1.1 0-1.99.9-1.99 2s.89 2 1.99 2 2-.9 2-2-.9-2-2-2zm-9.83-3.25l.03-.12.9-1.63h7.45c.75 0 1.41-.41 1.75-1.03l3.86-7.01L19.42 4h-.01l-1.1 2-2.76 5H8.53l-.13-.27L6.16 6l-.95-2-.94-2H1v2h2l3.6 7.59-1.35 2.45c-.16.28-.25.61-.25.96 0 1.1.9 2 2 2h12v-2H7.42c-.13 0-.25-.11-.25-.25z"/></svg>
<div class="t" style="left:64.00px;top:591.70px;font-size:18.9px;color:#1a1a1a;font-weight:400;">Cart (44)</div>
<svg class="a" style="left:19.00px;top:642.00px;" width="28.80" height="28.80" viewBox="0 0 24 24"><path fill="#111" d="M11.8 10.9c-2.27-.59-3-1.2-3-2.15 0-1.09 1.01-1.85 2.7-1.85 1.78 0 2.44.85 2.5 2.1h2.21c-.07-1.72-1.12-3.3-3.21-3.81V3h-3v2.16c-1.94.42-3.5 1.68-3.5 3.61 0 2.31 1.91 3.46 4.7 4.13 2.5.6 3 1.48 3 2.41 0 .69-.49 1.79-2.7 1.79-2.06 0-2.87-.92-2.98-2.1h-2.2c.12 2.19 1.76 3.42 3.68 3.83V21h3v-2.15c1.95-.37 3.5-1.5 3.5-3.55 0-2.84-2.43-3.81-4.7-4.4z"/></svg>
<div class="t" style="left:64.00px;top:647.70px;font-size:18.9px;color:#1a1a1a;font-weight:400;">Payments</div>
<svg class="a" style="left:19.00px;top:698.00px;" width="28.80" height="28.80" viewBox="0 0 24 24"><path fill="#111" d="M21.99 4c0-1.1-.89-2-1.99-2H4c-1.1 0-2 .9-2 2v12c0 1.1.9 2 2 2h14l4 4-.01-18z"/></svg>
<div class="t" style="left:64.00px;top:703.70px;font-size:18.9px;color:#1a1a1a;font-weight:400;">Support/FAQ</div>
<div class="a" style="left:0.00px;top:0.00px;width:3792.00px;height:67.00px;background:#b6b6b6;"></div>
<div class="a" style="left:331.00px;top:0.00px;width:14.00px;height:67.00px;background:linear-gradient(90deg,rgba(0,0,0,.08),rgba(0,0,0,0));"></div>
<div class="t" style="left:27.50px;top:6.41px;font-size:42.5px;color:#163556;font-weight:400;font-family:'Liberation Serif',serif;">Chart</div>
<svg class="a" style="left:119px;top:6px" width="53" height="47" viewBox="0 0 53 47">
<defs><linearGradient id="xg" x1="0" y1="1" x2="1" y2="0"><stop offset="0" stop-color="#f6c94a"/><stop offset=".5" stop-color="#9d9a84"/><stop offset="1" stop-color="#f6c94a"/></linearGradient></defs>
<polygon points="34,0.5 53,0.5 19.5,46.5 0.5,46.5" fill="url(#xg)"/>
<polygon points="0.5,0.5 19,0.5 53,46.5 33.5,46.5" fill="#f5c84c"/>
</svg>
<svg class="a" style="left:288px;top:14px" width="26" height="30" viewBox="0 0 26 30">
<path fill="#151515" d="M6.4 1.8h13.5v2.1h-1.6v7.6l3.3 4.3v2.1H15.3v8.5h-2.4v-8.5H5.2v-2.1l3-4.2V3.9H6.4z"/>
<path stroke="#b6b6b6" stroke-width="3.2" d="M2 3.5L22.5 24"/>
<path stroke="#151515" stroke-width="1.9" d="M1.8 2.3L24.3 27.3"/>
</svg>
<svg class="a" style="left:355.40px;top:16.60px;" width="28.80" height="28.80" viewBox="0 0 24 24"><path fill="#151515" d="M3 18h18v-2H3v2zm0-5h18v-2H3v2zm0-7v2h18V6H3z"/></svg>
<svg class="a" style="left:419.20px;top:16.40px;" width="28.80" height="28.80" viewBox="0 0 24 24"><path fill="#151515" d="M12 12c2.21 0 4-1.79 4-4s-1.79-4-4-4-4 1.79-4 4 1.79 4 4 4zm0 2c-2.67 0-8 1.34-8 4v2h16v-2c0-2.66-5.33-4-8-4z"/></svg>
<div class="a" style="left:526.60px;top:1.90px;width:596.40px;height:54.20px;background:#e9e9e9;border-radius:4px;"></div>
<div class="a" style="left:678.20px;top:1.20px;width:377.40px;height:54.90px;background:#f0f1f5;"></div>
<div class="t" style="left:549.60px;top:19.56px;font-size:18.0px;color:#333;font-weight:400;">All</div>
<svg class="a" style="left:653px;top:22px" width="20" height="14" viewBox="0 0 20 14"><path d="M1.5 2.2L10 10.8 18.5 2.2" fill="none" stroke="#333" stroke-width="2"/></svg>
<div class="t" style="left:694.00px;top:16.85px;font-size:17.3px;color:#8c8c8c;font-weight:700;">Search Chart X</div>
<svg class="a" style="left:1073.80px;top:11.50px;" width="31.40" height="31.40" viewBox="0 0 24 24"><path fill="#333" d="M15.5 14h-.79l-.28-.27C15.41 12.59 16 11.11 16 9.5 16 5.91 13.09 3 9.5 3S3 5.91 3 9.5 5.91 16 9.5 16c1.61 0 3.09-.59 4.23-1.57l.27.28v.79l5 4.99L20.49 19l-4.99-5zm-6 0C7.01 14 5 11.99 5 9.5S7.01 5 9.5 5 14 7.01 14 9.5 11.99 14 9.5 14z"/></svg>
<svg class="a" style="left:3460px;top:5px" width="45" height="45" viewBox="0 0 1031 1031">
<path d="M120 930C130 830 220 770 330 760H680C790 770 880 830 890 930Z" fill="#5b626c" stroke="#111" stroke-width="28"/>
<path d="M480 95C300 100 205 270 198 520L195 690C215 765 320 790 400 765H610C690 790 800 765 815 690L812 520C806 330 770 200 715 150L750 150C700 108 600 92 480 95Z" fill="#5d6670" stroke="#111" stroke-width="28"/>
<path d="M208 545C205 690 280 765 395 760 360 700 335 620 318 520Z" fill="#c9646e"/>
<path d="M802 545C805 690 730 765 615 760 650 700 675 620 692 520Z" fill="#c9646e"/>
<path d="M310 520C330 640 420 705 505 705 590 705 680 640 700 520Z" fill="#fff" stroke="#111" stroke-width="24"/>
<path d="M260 560C300 430 400 375 505 375 610 375 710 430 750 560 700 520 620 500 505 500 390 500 310 520 260 560Z" fill="#5d6670" stroke="#111" stroke-width="24"/>
<ellipse cx="503" cy="500" rx="30" ry="45" fill="#dfe8ff" stroke="#111" stroke-width="20"/>
<path d="M440 585C470 620 540 620 570 585" fill="none" stroke="#111" stroke-width="22"/>
<path d="M505 800V930" stroke="#111" stroke-width="22"/>
</svg>
<div class="a" style="left:3501.00px;top:1.00px;width:149.00px;height:48.00px;background:#4a5560;border-radius:9px;box-shadow:0 2px 5px rgba(0,0,0,.25);"></div>
<div class="t" style="left:3518.30px;top:15.67px;font-size:18.1px;color:#fff;font-weight:700;">New Request</div>
<svg class="a" style="left:3680.90px;top:15.90px;" width="29.10" height="29.10" viewBox="0 0 24 24"><path fill="#151515" d="M7 14H5v5h5v-2H7v-3zm-2-4h2V7h3V5H5v5zm12 7h-3v2h5v-5h-2v3zM14 5v2h3v3h2V5h-5z"/></svg>
<svg class="a" style="left:3745.20px;top:16.70px;" width="28.20" height="28.20" viewBox="0 0 24 24"><path fill="#151515" d="M12 2C6.48 2 2 6.48 2 12s4.48 10 10 10 10-4.48 10-10S17.52 2 12 2zm0 3c1.66 0 3 1.34 3 3s-1.34 3-3 3-3-1.34-3-3 1.34-3 3-3zm0 14.2c-2.5 0-4.71-1.28-6-3.22.03-1.99 4-3.08 6-3.08 1.99 0 5.97 1.09 6 3.08-1.29 1.94-3.5 3.22-6 3.22z"/></svg>
<div class="a" style="left:3745.00px;top:139.00px;width:47.00px;height:52.80px;background:#4b4b4b;"></div>
<svg class="a" style="left:3757.00px;top:151.00px;" width="28.00" height="28.00" viewBox="0 0 24 24"><path fill="#fff" d="M19.43 12.98c.04-.32.07-.64.07-.98s-.03-.66-.07-.98l2.11-1.65c.19-.15.24-.42.12-.64l-2-3.46c-.12-.22-.39-.3-.61-.22l-2.49 1c-.52-.4-1.08-.73-1.69-.98l-.38-2.65C14.46 2.18 14.25 2 14 2h-4c-.25 0-.46.18-.49.42l-.38 2.65c-.61.25-1.17.59-1.69.98l-2.49-1c-.23-.09-.49 0-.61.22l-2 3.46c-.13.22-.07.49.12.64l2.11 1.65c-.04.32-.07.65-.07.98s.03.66.07.98l-2.11 1.65c-.19.15-.24.42-.12.64l2 3.46c.12.22.39.3.61.22l2.49-1c.52.4 1.08.73 1.69.98l.38 2.65c.03.24.24.42.49.42h4c.25 0 .46-.18.49-.42l.38-2.65c.61-.25 1.17-.59 1.69-.98l2.49 1c.23.09.49 0 .61-.22l2-3.46c.12-.22.07-.49-.12-.64l-2.11-1.65zM12 15.5c-1.93 0-3.5-1.57-3.5-3.5s1.57-3.5 3.5-3.5 3.5 1.57 3.5 3.5-1.57 3.5-3.5 3.5z"/></svg>
<div class="a" style="left:3788.00px;top:67.00px;width:4.00px;height:1451.00px;background:#dadada;"></div>
<div class="a" style="left:3788.00px;top:67.00px;width:4.00px;height:27.00px;background:#5e5e5e;"></div>
<div class="a" style="left:3788.00px;top:929.00px;width:4.00px;height:589.00px;background:#5e5e5e;"></div>
<div class="a" style="left:3788.00px;top:139.00px;width:4.00px;height:52.80px;background:#454545;"></div>
</body></html>
